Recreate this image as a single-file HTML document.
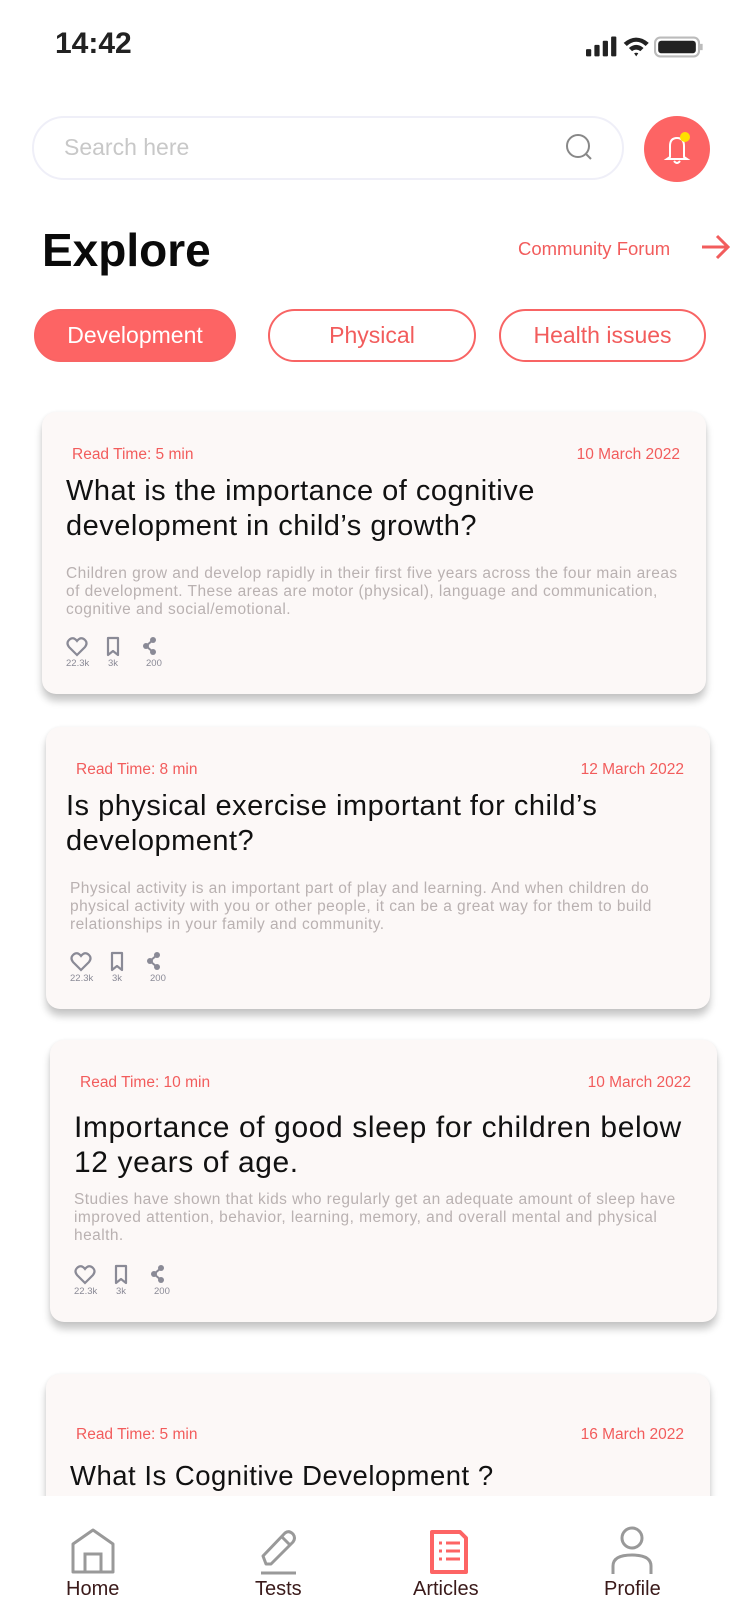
<!DOCTYPE html>
<html><head><meta charset="utf-8"><style>
*{margin:0;padding:0;box-sizing:border-box}
body{width:750px;height:1624px;background:#fff;font-family:"Liberation Sans",sans-serif;position:relative;overflow:hidden}
.a{position:absolute}
.card{position:absolute;width:664px;height:282px;background:#fcf8f7;border-radius:14px;box-shadow:0 7px 8px rgba(0,0,0,0.22),0 0 3px rgba(0,0,0,0.06)}
.rt{position:absolute;left:30px;top:34px;font-size:15.5px;line-height:18px;color:#f25c5c}
.dt{position:absolute;right:26px;top:34px;font-size:15.5px;line-height:18px;color:#f25c5c}
.tt{position:absolute;left:24px;top:62px;font-size:29px;line-height:35px;color:#111;white-space:nowrap;letter-spacing:0.5px}
.ds{position:absolute;left:24px;top:153px;font-size:15.5px;line-height:18px;color:#b9b1b1;white-space:nowrap;letter-spacing:0.45px}
.ic{position:absolute;left:24px;top:223px;width:120px;height:40px}
.lb{position:absolute;top:23px;font-size:9.5px;color:#8a8a96}
.chip{position:absolute;top:309px;height:53px;border:2px solid #f86464;border-radius:27px;color:#f25c5c;font-size:23px;display:flex;align-items:center;justify-content:center}
.nl{position:absolute;top:1578px;font-size:20px;color:#3a1a1a}
</style></head><body>
<div class="a" style="left:55px;top:27px;font-size:30px;font-weight:bold;color:#222">14:42</div>
<svg class="a" style="left:586px;top:33px" width="136" height="28" viewBox="0 0 130 24">
<rect x="0" y="14" width="5" height="7" rx="1" fill="#222"/><rect x="8" y="10" width="5" height="11" rx="1" fill="#222"/><rect x="16" y="6" width="5" height="15" rx="1" fill="#222"/><rect x="24" y="2" width="5" height="19" rx="1" fill="#222"/>
<path d="M36 8 Q48 -2 60 8 L57 11 Q48 3 39 11Z M41 13 Q48 7 55 13 L52 16 Q48 13 44 16Z M46 18 L48 21 L50 18 Q48 17 46 18Z" fill="#222"/>
<rect x="66" y="3" width="42" height="18" rx="5" fill="none" stroke="#bbb" stroke-width="2"/><rect x="69" y="6" width="36" height="12" rx="3" fill="#222"/><rect x="109" y="9" width="2.5" height="6" fill="#bbb"/>
</svg>
<div class="a" style="left:32px;top:116px;width:592px;height:64px;border:2px solid #efeff8;border-radius:32px"></div>
<div class="a" style="left:64px;top:134px;font-size:23px;color:#c8c8c8">Search here</div>
<svg class="a" style="left:564px;top:132px" width="32" height="32"><circle cx="14" cy="14" r="11" fill="none" stroke="#888" stroke-width="2"/><path d="M22 22 L27 27" stroke="#888" stroke-width="2"/></svg>
<div class="a" style="left:644px;top:116px;width:66px;height:66px;border-radius:50%;background:#fd6464"></div>
<svg class="a" style="left:660px;top:130px" width="36" height="38"><path d="M10 27 L10 16 Q10 8 17 8 Q24 8 24 16 L24 27 L27 29 L7 29 Z" fill="none" stroke="#fff" stroke-width="2"/><path d="M14 31 Q17 35 20 31" fill="none" stroke="#fff" stroke-width="2"/><circle cx="25" cy="7" r="5" fill="#ffe000"/></svg>
<div class="a" style="left:42px;top:223px;font-size:46px;font-weight:bold;color:#0a0a0a">Explore</div>
<div class="a" style="left:518px;top:238px;font-size:18.5px;color:#f25c5c">Community Forum</div>
<svg class="a" style="left:700px;top:232px" width="32" height="30"><path d="M2 15 H28 M17 4 L28 15 L17 26" fill="none" stroke="#f25c5c" stroke-width="3"/></svg>
<div class="chip" style="left:34px;width:202px;background:#fd6464;color:#fff">Development</div>
<div class="chip" style="left:268px;width:208px">Physical</div>
<div class="chip" style="left:499px;width:207px">Health issues</div>

<div class="card" style="left:42px;top:412px">
<div class="rt">Read Time: 5 min</div><div class="dt">10 March 2022</div>
<div class="tt">What is the importance of cognitive<br>development in child’s growth?</div>
<div class="ds">Children grow and develop rapidly in their first five years across the four main areas<br>of development. These areas are motor (physical), language and communication,<br>cognitive and social/emotional.</div>
<div class="ic"><svg width="120" height="24"><path d="M11 20 L3 12 Q0 8 3 5 Q7 1 11 6 Q15 1 19 5 Q22 8 19 12Z" fill="none" stroke="#8a8a96" stroke-width="2.2"/><path d="M42 3 H52 V20 L47 16 L42 20Z" fill="none" stroke="#8a8a96" stroke-width="2.2" stroke-linejoin="round"/><circle cx="87" cy="5" r="3" fill="#8a8a96"/><circle cx="80" cy="11" r="3" fill="#8a8a96"/><circle cx="87" cy="17" r="3" fill="#8a8a96"/><path d="M87 5 L80 11 L87 17" stroke="#8a8a96" stroke-width="2" fill="none"/></svg><div class="lb" style="left:0">22.3k</div><div class="lb" style="left:42px">3k</div><div class="lb" style="left:80px">200</div></div>
</div>

<div class="card" style="left:46px;top:727px">
<div class="rt">Read Time: 8 min</div><div class="dt">12 March 2022</div>
<div class="tt" style="left:20px">Is physical exercise important for child’s<br>development?</div>
<div class="ds">Physical activity is an important part of play and learning. And when children do<br>physical activity with you or other people, it can be a great way for them to build<br>relationships in your family and community.</div>
<div class="ic"><svg width="120" height="24"><path d="M11 20 L3 12 Q0 8 3 5 Q7 1 11 6 Q15 1 19 5 Q22 8 19 12Z" fill="none" stroke="#8a8a96" stroke-width="2.2"/><path d="M42 3 H52 V20 L47 16 L42 20Z" fill="none" stroke="#8a8a96" stroke-width="2.2" stroke-linejoin="round"/><circle cx="87" cy="5" r="3" fill="#8a8a96"/><circle cx="80" cy="11" r="3" fill="#8a8a96"/><circle cx="87" cy="17" r="3" fill="#8a8a96"/><path d="M87 5 L80 11 L87 17" stroke="#8a8a96" stroke-width="2" fill="none"/></svg><div class="lb" style="left:0">22.3k</div><div class="lb" style="left:42px">3k</div><div class="lb" style="left:80px">200</div></div>
</div>

<div class="card" style="left:50px;top:1040px;width:667px">
<div class="rt">Read Time: 10 min</div><div class="dt">10 March 2022</div>
<div class="tt" style="top:70px;font-size:30px;letter-spacing:0.6px">Importance of good sleep for children below<br>12 years of age.</div>
<div class="ds" style="top:151px">Studies have shown that kids who regularly get an adequate amount of sleep have<br>improved attention, behavior, learning, memory, and overall mental and physical<br>health.</div>
<div class="ic"><svg width="120" height="24"><path d="M11 20 L3 12 Q0 8 3 5 Q7 1 11 6 Q15 1 19 5 Q22 8 19 12Z" fill="none" stroke="#8a8a96" stroke-width="2.2"/><path d="M42 3 H52 V20 L47 16 L42 20Z" fill="none" stroke="#8a8a96" stroke-width="2.2" stroke-linejoin="round"/><circle cx="87" cy="5" r="3" fill="#8a8a96"/><circle cx="80" cy="11" r="3" fill="#8a8a96"/><circle cx="87" cy="17" r="3" fill="#8a8a96"/><path d="M87 5 L80 11 L87 17" stroke="#8a8a96" stroke-width="2" fill="none"/></svg><div class="lb" style="left:0">22.3k</div><div class="lb" style="left:42px">3k</div><div class="lb" style="left:80px">200</div></div>
</div>

<div class="card" style="left:46px;top:1374px;height:200px">
<div class="rt" style="top:52px">Read Time: 5 min</div><div class="dt" style="top:52px">16 March 2022</div>
<div class="tt" style="top:84px;font-size:27.5px">What Is Cognitive Development ?</div>
</div>

<div class="a" style="left:0;top:1496px;width:750px;height:128px;background:#fff;z-index:5">
<svg class="a" style="left:70px;top:32px" width="46" height="48"><path d="M3 44 V16 L23 2 L43 16 V44 Z" fill="none" stroke="#999" stroke-width="3" stroke-linejoin="round"/><path d="M15 44 V26 H31 V44" fill="none" stroke="#999" stroke-width="3"/></svg>
<svg class="a" style="left:258px;top:34px" width="42" height="46"><path d="M8 34 L5 26 L27 3 Q31 0 35 4 Q38 8 35 12 L13 34 Z" fill="none" stroke="#999" stroke-width="3" stroke-linejoin="round"/><path d="M24 7 L32 15" stroke="#999" stroke-width="3"/><path d="M3 43 H38" stroke="#999" stroke-width="3"/></svg>
<svg class="a" style="left:428px;top:32px" width="42" height="48"><path d="M4 4 H32 L38 10 V44 H4 Z" fill="none" stroke="#fd6464" stroke-width="4" stroke-linejoin="round"/><path d="M11 15 H14 M18 15 H32 M11 23 H14 M18 23 H32 M11 31 H14 M18 31 H32" stroke="#fd6464" stroke-width="3"/></svg>
<svg class="a" style="left:610px;top:30px" width="44" height="50"><circle cx="22" cy="12" r="10" fill="none" stroke="#999" stroke-width="3"/><path d="M3 48 V40 Q3 29 22 29 Q41 29 41 40 V48" fill="none" stroke="#999" stroke-width="3"/></svg>
<div class="nl" style="left:66px;top:82px">Home</div>
<div class="nl" style="left:255px;top:82px">Tests</div>
<div class="nl" style="left:413px;top:82px">Articles</div>
<div class="nl" style="left:604px;top:82px">Profile</div>
</div>
</body></html>
